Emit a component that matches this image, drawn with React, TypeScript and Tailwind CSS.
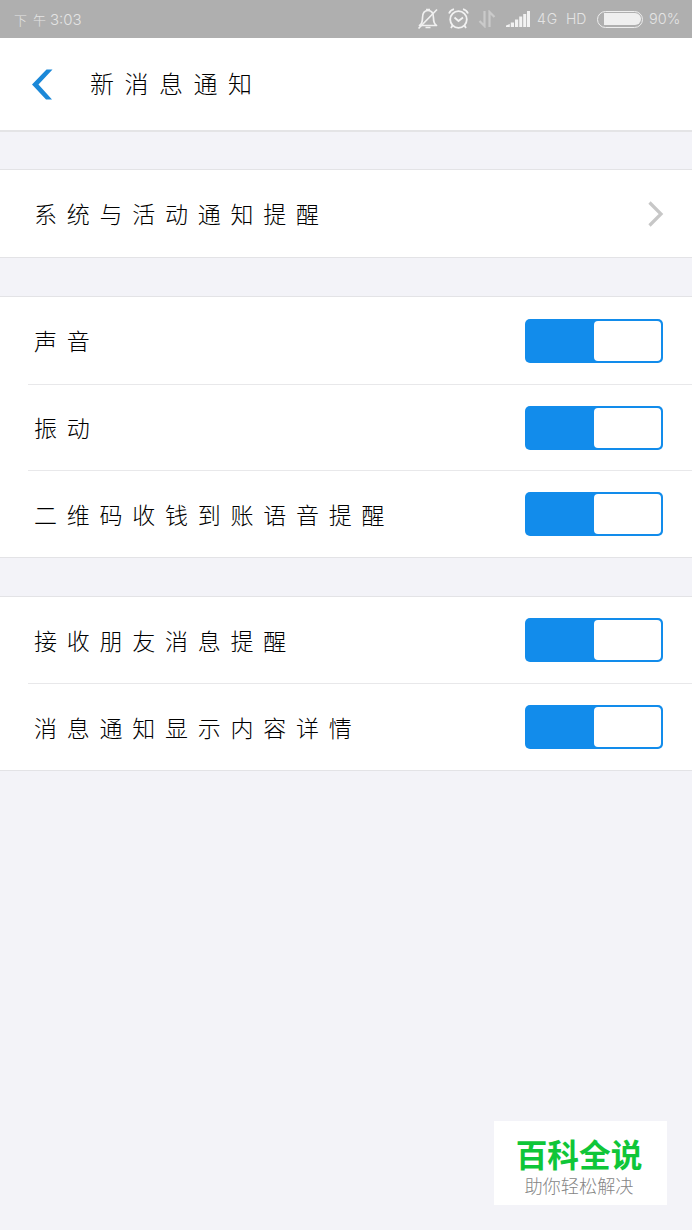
interface SettingRow {
  label: string;
  toggle?: boolean;
}

const groups: SettingRow[][] = [
  [{ label: "系统与活动通知提醒" }],
  [
    { label: "声音", toggle: true },
    { label: "振动", toggle: true },
    { label: "二维码收钱到账语音提醒", toggle: true },
  ],
  [
    { label: "接收朋友消息提醒", toggle: true },
    { label: "消息通知显示内容详情", toggle: true },
  ],
];

function StatusBar() {
  return (
    <div className="flex h-[38px] items-center justify-between bg-[#afafaf] pl-[14px] pr-[11px] text-[#e4e4e4]">
      <div className="flex items-center text-[14px] font-light leading-none">
        <span className="w-[36px] whitespace-nowrap text-[13px] tracking-[6px]">下午</span>
        <span className="font-['Inter','Noto_Sans_CJK_SC',sans-serif] text-[15px]">3:03</span>
      </div>
      <div className="flex items-center font-['Inter','Noto_Sans_CJK_SC',sans-serif] text-[13.5px] font-light leading-none">
        <svg className="mr-[9px]" width="22" height="22" viewBox="0 0 22 22" fill="none" stroke="#f0f0f0" strokeWidth="1.7">
          <path d="M2.5 17.5Q5.5 15.5 5.5 10C5.5 5 7.5 2.5 11 2.5C14.5 2.5 16.5 5 16.5 10Q16.5 15.5 19.5 17.5Z" strokeLinejoin="round" />
          <path d="M9 1.500h4M8.500 19.500h5" />
          <path d="M20 1.500L1.500 20.500" />
        </svg>
        <svg className="mr-[9px]" width="21" height="22" viewBox="0 0 21 22" fill="none" stroke="#f2f2f2" strokeWidth="1.8">
          <circle cx="10.500" cy="11.500" r="8.300" />
          <path d="M6.500 9.500L10.500 13L15 9.500M1 5.500Q2.500 2 6 1.200M20 5.500Q18.500 2 15 1.200M4.500 17.500L3 20M16.500 17.500L18 20" />
        </svg>
        <svg className="mr-[10px]" width="18" height="18" viewBox="0 0 18 18" fill="none" stroke="#cacaca" strokeWidth="2.2">
          <path d="M6.500 1V16L1.500 11M11.500 17V2L16.500 7" />
        </svg>
        <svg className="mr-[7px]" width="24" height="18" viewBox="0 0 24 18" fill="#f2f2f2">
          <path d="M0 15.500L3.800 14V17H0ZM4.800 12.500h3.200v4.500H4.800ZM9 9.500h3.200v7.500H9ZM13.200 6.500h3v10.500h-3ZM17.200 4h3v13h-3ZM21 1h3v16h-3Z" />
        </svg>
        <span className="w-[29px] text-[14px] tracking-[1px]">4G</span>
        <span className="w-[31px] text-[14px]">HD</span>
        <div className="mr-[6px] flex h-[17px] w-[46px] items-center justify-end rounded-full border-[1.5px] border-[#eeeeee] pr-[1px]">
          <div className="h-[12px] w-[37px] rounded-r-full bg-[#efefef]" />
        </div>
        <span className="w-[32px] whitespace-nowrap text-[14.500px]">90%</span>
      </div>
    </div>
  );
}

function Toggle() {
  return (
    <div className="flex h-[44px] w-[138px] justify-end rounded-[5px] bg-[#128ceb] p-[2px]">
      <div className="h-full w-[67px] rounded-[4px] bg-white" />
    </div>
  );
}

function Row({ label, toggle }: SettingRow) {
  return (
    <div className="flex h-full items-center justify-between pl-[6px] pr-[29px]">
      <span className="text-[23px] font-light leading-none tracking-[9.750px]">{label}</span>
      {toggle ? (
        <Toggle />
      ) : (
        <svg className="-mr-px" width="16" height="26" viewBox="0 0 16 26" fill="none" stroke="#c7c7c7" strokeWidth="3.2">
          <path d="M1.500 1.500L13 13L1.500 24.500" />
        </svg>
      )}
    </div>
  );
}

function rowClass(index: number, count: number) {
  if (count === 1) return "h-[87px]";
  if (index === count - 1) return "h-[86px]";
  return index === 0 && count > 2
    ? "h-[88px] border-b border-[#e8e8ea]"
    : count > 2
      ? "h-[86px] border-b border-[#e8e8ea]"
      : "h-[87px] border-b border-[#e8e8ea]";
}

export default function App() {
  return (
    <div className="relative flex h-[1230px] w-[692px] flex-col overflow-hidden bg-[#f3f3f8] font-['Noto_Sans_CJK_SC',sans-serif] text-black">
      <StatusBar />
      <header className="flex h-[94px] items-center border-b-2 border-[#e4e4e6] bg-white pl-[31px]">
        <svg width="22" height="31" viewBox="0 0 22 31" fill="#1b88d8">
          <path d="M15.500 0.500H21.500L7.500 15.500L21 30.500H15L1 15.500Z" />
        </svg>
        <h1 className="pb-[2px] pl-[37px] text-[24px] font-light leading-none tracking-[10.500px]">新消息通知</h1>
      </header>
      <main className="flex flex-col gap-[38px] pt-[37px]">
        {groups.map((rows, i) => (
          <section key={i} className="border-y border-[#e3e3e6] bg-white pl-[28px]">
            {rows.map((row, j) => (
              <div key={row.label} className={rowClass(j, rows.length)}>
                <Row {...row} />
              </div>
            ))}
          </section>
        ))}
      </main>
      <div className="absolute left-[494px] top-[1121px] flex h-[84px] w-[173px] flex-col items-center bg-white pr-[3px] pt-[15px]">
        <p className="text-[31.700px] font-bold leading-[34px] text-[#0fc638]">百科全说</p>
        <p className="pt-[3px] text-[18.200px] font-light leading-[25px] text-[#858585]">助你轻松解决</p>
      </div>
    </div>
  );
}
